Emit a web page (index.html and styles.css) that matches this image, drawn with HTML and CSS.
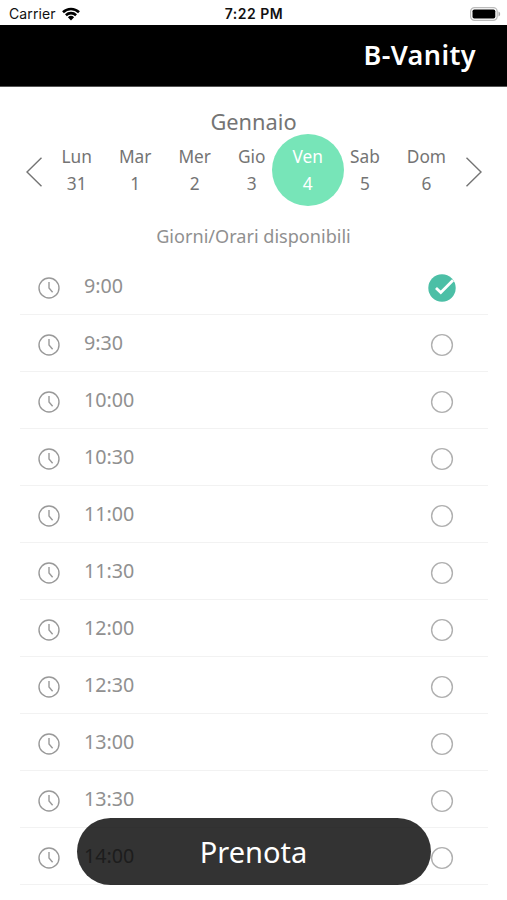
FILE: index.html
```
<!DOCTYPE html>
<html lang="it">
<head>
<meta charset="utf-8">
<title>B-Vanity</title>
<link rel="stylesheet" href="styles.css">
</head>
<body>
<svg class="defs" aria-hidden="true">
  <symbol id="clock" viewBox="0 0 22 22"><circle cx="11" cy="11" r="10"/><path d="M11 5v6l3.600 4.300"/></symbol>
  <symbol id="ring" viewBox="0 0 28 28"><circle cx="14" cy="14" r="10.400"/></symbol>
</svg>
<header class="status">
  <span class="carrier">Carrier</span>
  <svg class="wifi" viewBox="0 0 18 14"><path d="M1 5.300a11.500 11.500 0 0 1 16 0M3.900 8.200a7.400 7.400 0 0 1 10.200 0"/><path class="dot" d="M5.900 10.300a4.500 4.500 0 0 1 6.200 0L9 13.500z"/></svg>
  <span class="time">7:22 PM</span>
  <svg class="battery" viewBox="0 0 31 14"><rect class="shell" x=".6" y=".6" width="26.600" height="12.800" rx="4"/><rect x="2.500" y="2.500" width="22.800" height="9" rx="1.800"/><path class="tip" d="M28.500 4.500c2.200.8 2.200 4.200 0 5z"/></svg>
</header>
<div class="appbar"><h1>B-Vanity</h1></div>
<main>
  <h2 class="month">Gennaio</h2>
  <nav class="week">
    <svg class="arrow" viewBox="0 0 16 30"><path d="M15.500 .8L1 15l14.500 14.200"/></svg>
    <div class="days">
      <div class="day"><span>Lun</span><span>31</span></div>
      <div class="day"><span>Mar</span><span>1</span></div>
      <div class="day"><span>Mer</span><span>2</span></div>
      <div class="day"><span>Gio</span><span>3</span></div>
      <div class="day selected"><span>Ven</span><span>4</span></div>
      <div class="day"><span>Sab</span><span>5</span></div>
      <div class="day"><span>Dom</span><span>6</span></div>
    </div>
    <svg class="arrow" viewBox="0 0 16 30"><path d="M.5 .8L15 15L.5 29.200"/></svg>
  </nav>
  <p class="caption">Giorni/Orari disponibili</p>
  <ul class="slots">
    <li><svg class="clock"><use href="#clock"/></svg><span>9:00</span><svg class="check" viewBox="0 0 28 28"><circle cx="14" cy="14" r="13.700"/><path d="M8 14l4.800 4.500L25 6.300"/></svg></li>
    <li><svg class="clock"><use href="#clock"/></svg><span>9:30</span><svg class="ring"><use href="#ring"/></svg></li>
    <li><svg class="clock"><use href="#clock"/></svg><span>10:00</span><svg class="ring"><use href="#ring"/></svg></li>
    <li><svg class="clock"><use href="#clock"/></svg><span>10:30</span><svg class="ring"><use href="#ring"/></svg></li>
    <li><svg class="clock"><use href="#clock"/></svg><span>11:00</span><svg class="ring"><use href="#ring"/></svg></li>
    <li><svg class="clock"><use href="#clock"/></svg><span>11:30</span><svg class="ring"><use href="#ring"/></svg></li>
    <li><svg class="clock"><use href="#clock"/></svg><span>12:00</span><svg class="ring"><use href="#ring"/></svg></li>
    <li><svg class="clock"><use href="#clock"/></svg><span>12:30</span><svg class="ring"><use href="#ring"/></svg></li>
    <li><svg class="clock"><use href="#clock"/></svg><span>13:00</span><svg class="ring"><use href="#ring"/></svg></li>
    <li><svg class="clock"><use href="#clock"/></svg><span>13:30</span><svg class="ring"><use href="#ring"/></svg></li>
    <li><svg class="clock"><use href="#clock"/></svg><span>14:00</span><svg class="ring"><use href="#ring"/></svg></li>
  </ul>
</main>
<button class="book">Prenota</button>
</body>
</html>
```
FILE: styles.css
```
* { box-sizing: border-box; }
body {
  margin: 0;
  height: 900px;
  overflow: hidden;
  background: #fff;
  color: #747474;
  font-family: "Noto Sans", "Open Sans", sans-serif;
}
h1, h2, p, ul { margin: 0; padding: 0; font-weight: 400; }
svg { display: block; flex: none; fill: none; }
.defs { position: absolute; width: 0; height: 0; }

.status {
  display: grid;
  grid-template-columns: 53px 18px 1fr 31px;
  align-items: center;
  height: 25px;
  padding: 2px 6px 0 9px;
  color: #111;
  font: 14px/20px Inter, sans-serif;
}
.carrier { letter-spacing: .1px; }
.wifi { width: 18px; height: 14px; stroke: #000; stroke-width: 2.6; }
.wifi .dot { fill: #000; stroke: none; }
.time { justify-self: center; padding-right: 42px; font-weight: 600; letter-spacing: .5px; }
.battery { width: 31px; height: 14px; fill: #000; }
.battery .shell { fill: #fff; stroke: #bbb; stroke-width: 1.2; }
.battery .tip { fill: #aaa; }

.appbar {
  display: flex;
  justify-content: flex-end;
  height: 62px;
  padding: 11px 31px 0 0;
  border-bottom: 1px solid #555;
  background: #000;
  color: #fff;
}
.appbar h1 { font-size: 27px; line-height: 38px; font-weight: 600; letter-spacing: .4px; }

.month { padding-top: 20px; text-align: center; font-size: 21.800px; line-height: 30px; }
.week {
  display: flex;
  justify-content: space-between;
  height: 72px;
  margin-top: -3px;
  padding: 0 25px 0 26px;
}
.arrow { width: 16px; height: 30px; margin-top: 23px; stroke: #747474; stroke-width: 1.4; }
.days { display: flex; flex: 1; justify-content: space-between; padding: 0 20px 0 19.500px; }
.day {
  position: relative;
  display: flex;
  flex-direction: column;
  align-items: center;
  padding-top: 9px;
  font-size: 17.300px;
  line-height: 27px;
}
.selected { color: #fff; }
.selected::before {
  content: "";
  position: absolute;
  z-index: -1;
  top: 0;
  left: 50%;
  width: 72px;
  height: 72px;
  margin-left: -36px;
  border-radius: 50%;
  background: #77e5b8;
}
.caption { margin-top: 17px; color: #909090; text-align: center; font-size: 18.100px; line-height: 26px; }

.slots { margin: 8.500px 19px 0 20px; list-style: none; }
.slots li {
  display: flex;
  align-items: center;
  height: 57.050px;
  padding: 5px 32px 0 18px;
  border-bottom: 1px solid #f2f2f2;
  color: #909090;
  font-size: 19.700px;
}
.slots span { flex: 1; margin: -5px 0 0 24px; }
.clock { width: 22px; height: 22px; stroke: #999; stroke-width: 1.4; }
.ring, .check { width: 28px; height: 28px; }
.ring { stroke: #b0b0b0; stroke-width: 1.4; }
.check circle { fill: #4cbfa6; }
.check path { stroke: #fff; stroke-width: 2.8; }

.book {
  position: absolute;
  top: 818px;
  left: 77px;
  width: 354px;
  height: 67px;
  padding: 0 1px 0 0;
  border: 0;
  border-radius: 34px;
  background: rgba(0, 0, 0, .8);
  color: #fff;
  font: 29px/67px "Noto Sans", "Open Sans", sans-serif;
}
```
